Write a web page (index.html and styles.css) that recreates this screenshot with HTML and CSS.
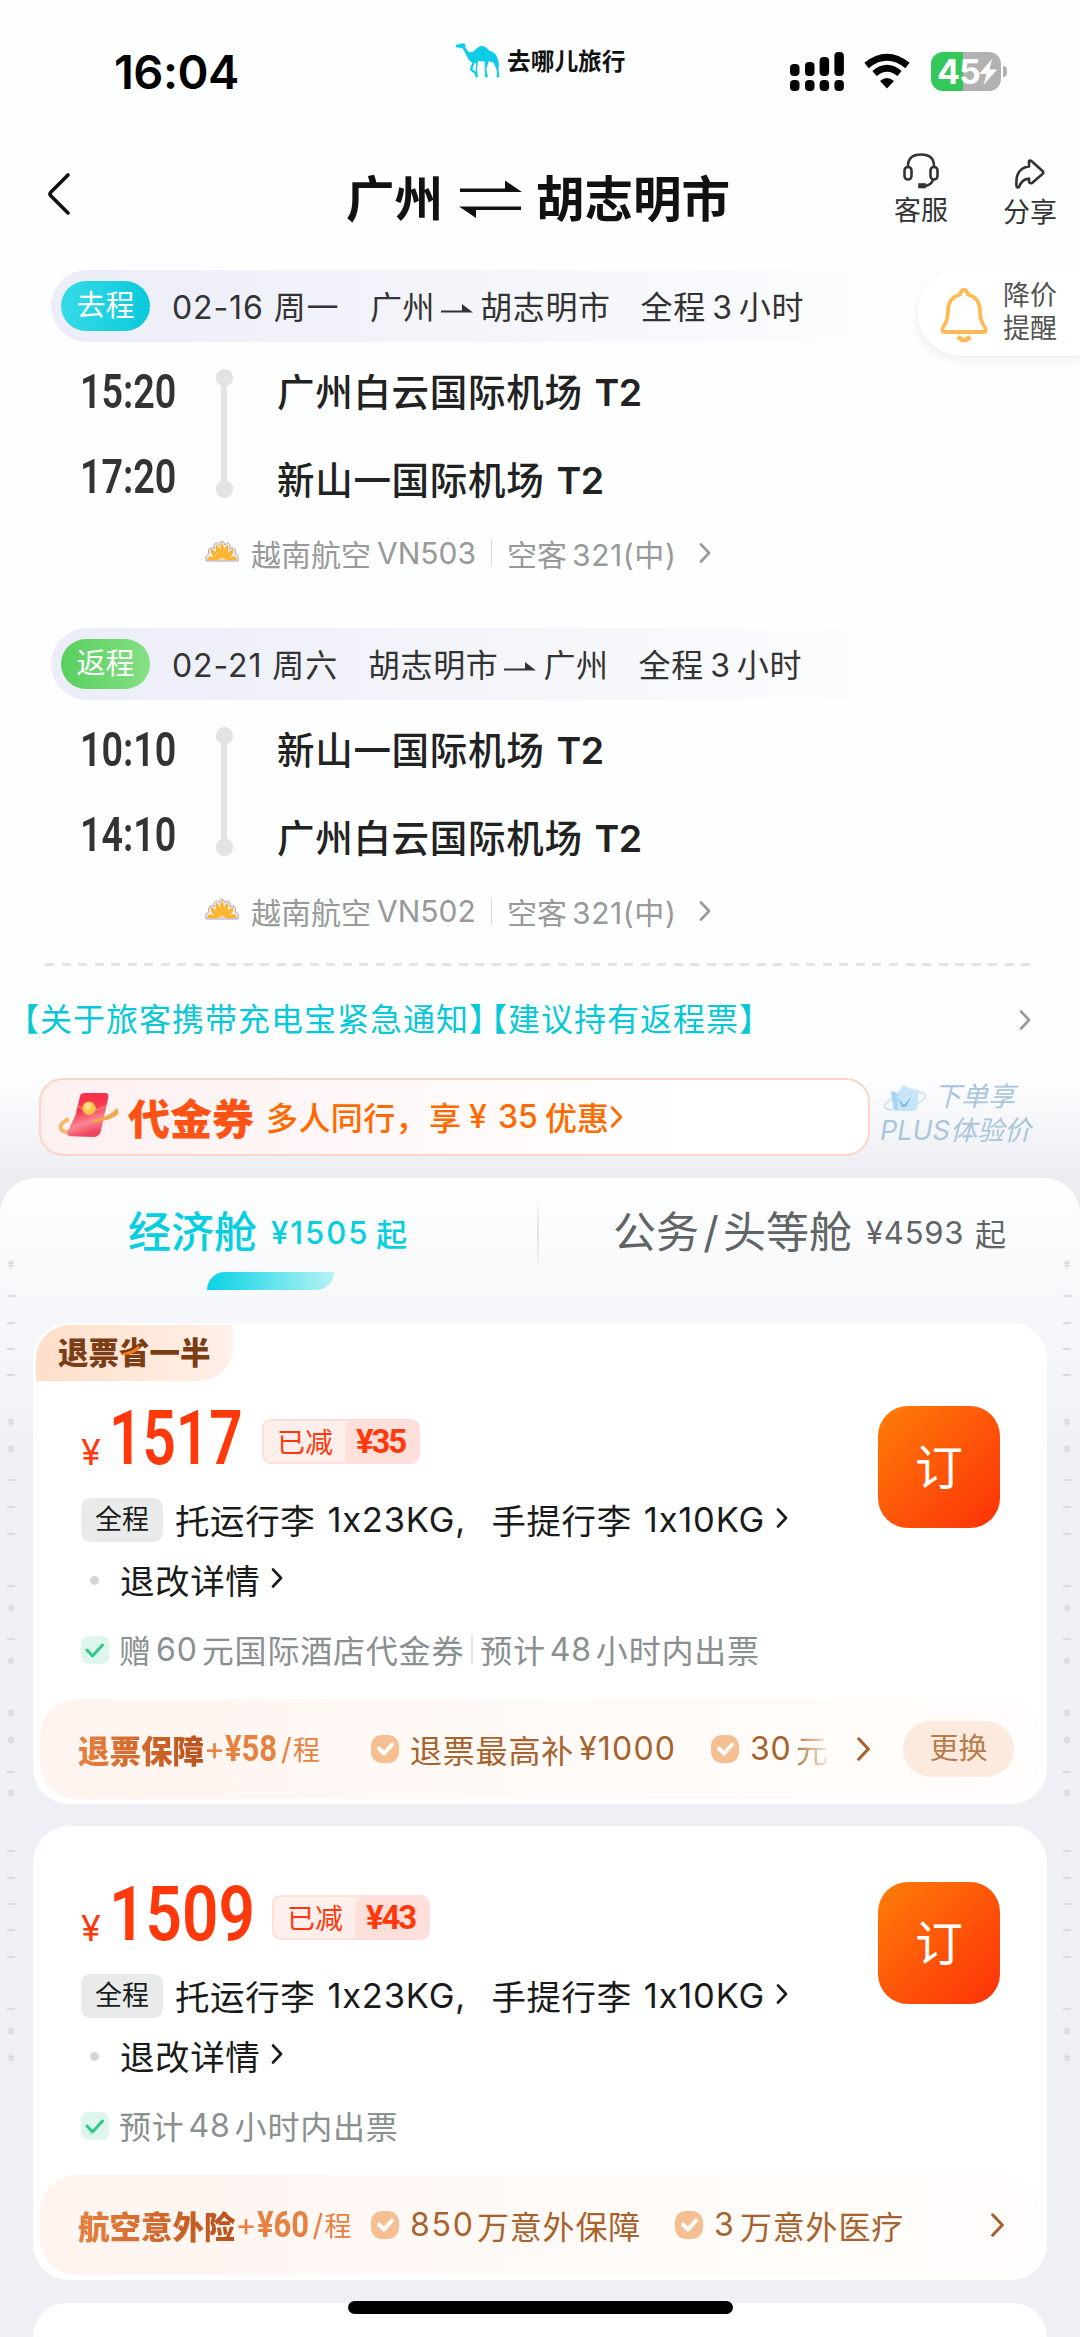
FILE: index.html
```html
<!DOCTYPE html>
<html lang="zh-CN">
<head>
<meta charset="utf-8">
<title>广州 ⇌ 胡志明市</title>
<link rel="stylesheet" href="styles.css">
</head>
<body>
<svg width="0" height="0" class="defs">
  <symbol id="chev" viewBox="0 0 12 20"><path d="M2 1.5 10 10 2 18.5" fill="none" stroke="currentColor" stroke-width="2.6" stroke-linecap="round" stroke-linejoin="round"/></symbol>
  <symbol id="to" viewBox="0 0 32 12"><path d="M0 8.500H21V2L32 10.500H0Z" fill="currentColor"/></symbol>
  <symbol id="lotus" viewBox="0 0 34 22"><path d="M1 21C0 17 2 14 4 14 2 9 6 6 9 9 8 3 12 1 14 5 15 0 19 0 20 5 22 1 26 3 25 9 28 6 32 9 30 14 32 14 34 17 33 21Z" fill="#f4f0f4" stroke="#a99fc0" stroke-width="1"/><g fill="#fdb52e"><path d="M17 1.500Q21 8 17 20 13 8 17 1.500"/><path d="M11 4Q17 9 16 20 9 13 11 4"/><path d="M23 4Q17 9 18 20 25 13 23 4"/><path d="M5 8.500Q13 12 15 20 6 18 5 8.500"/><path d="M29 8.500Q21 12 19 20 28 18 29 8.500"/><path d="M2 20Q3 13 13 19.500L12 20.500ZM32 20Q31 13 21 19.500L22 20.500Z"/></g></symbol>
  <symbol id="ok" viewBox="0 0 28 28"><rect width="28" height="28" rx="11" fill="#f5bf92"/><path d="m8 13.500 5 5 8-9" fill="none" stroke="#fff" stroke-width="4" stroke-linecap="round" stroke-linejoin="round"/></symbol>
  <symbol id="done" viewBox="0 0 28 28"><rect width="28" height="28" rx="7" fill="#dff6ec"/><path d="m6 14 5.500 6L21.500 9" fill="none" stroke="#2cca86" stroke-width="3" stroke-linecap="round" stroke-linejoin="round"/></symbol>
</svg>

<div class="status">
  <div class="clock">16:04</div>
  <div class="brand">
    <svg class="camel" viewBox="45 70 135 104"><path fill="#0bcde8" fill-rule="evenodd" d="M47 77Q50 72 59 74L66 71 75 72Q75 90 88 97 98 100 104 92 116 78 129 79 140 82 148 93 164 97 169 108 179 125 176 148L178 173H168Q173 169 170 150L160 128Q152 126 147 124L139 148 144 173H134Q138 160 134 148V126Q124 125 114 124L111 148 114 173H106Q107 168 104 163L91 153Q88 147 97 130 84 122 79 108 74 94 67 86L48 83ZM104 130 97 148 107 157 108 130Z"/></svg>
    <span>去哪儿旅行</span>
  </div>
  <svg class="signal" viewBox="0 0 54 39"><rect y="12" width="9.500" height="12" rx="4"/><rect x="15" y="10" width="9.500" height="14" rx="4"/><rect x="29.600" y="5" width="9.500" height="19" rx="4"/><rect x="44.400" width="9.500" height="24" rx="4"/><rect y="28" width="9.500" height="11" rx="4"/><rect x="15" y="28" width="9.500" height="11" rx="4"/><rect x="29.600" y="28" width="9.500" height="11" rx="4"/><rect x="44.400" y="28" width="9.500" height="11" rx="4"/></svg>
  <svg class="wifi" viewBox="0 0 46 35"><path d="M2.500 11.500Q23-5 43.500 11.500M10.500 19.500Q23 9 35.500 19.500" fill="none" stroke="#000" stroke-width="6.800"/><path d="M16 27Q23 21 30 27L23 34.500Z"/></svg>
  <div class="battery"><span>45</span><svg viewBox="0 0 18 26"><path d="M13 0 0 15H7.500L4.500 26 18 10.500H10.500Z" fill="#fff"/></svg></div>
  <i class="nub"></i>
</div>

<div class="header">
  <svg class="back" viewBox="0 0 24 42"><path d="M21 2 4 19Q2 21 4 23L21 40" fill="none" stroke="#111" stroke-width="3.600" stroke-linecap="round"/></svg>
  <h1><span>广州</span><svg viewBox="0 0 63 38"><path d="M1 8.500H46V.500L63 12H1ZM62 26.500H0L17 38V30H62Z" fill="#111"/></svg><span>胡志明市</span></h1>
  <div class="action service">
    <svg viewBox="0 0 36 36" fill="none" stroke="#333" stroke-width="2.600"><path d="M5 14V13Q5 1.500 18 1.500T31 13V14"/><rect x="1.500" y="14" width="7" height="12.500" rx="3.500"/><rect x="27.500" y="14" width="7" height="12.500" rx="3.500"/><path d="M30 27Q28 32.500 21 33"/><rect x="16.500" y="31.500" width="5" height="2.500" fill="#333"/></svg>
    <span>客服</span>
  </div>
  <div class="action share">
    <svg viewBox="0 0 30 30" fill="none" stroke="#333" stroke-width="2.600" stroke-linejoin="round"><path d="M14 2Q15 1 17 2.500L27.500 12Q29 13.500 27.500 15L17 24Q14 25 14 22V19.500Q7 20 4 28 1.500 29 1.500 27 0 9 14 7.500Z"/></svg>
    <span>分享</span>
  </div>
</div>

<div class="alert">
  <svg viewBox="0 0 48 54" fill="none" stroke="#ffb957" stroke-width="3.800" stroke-linejoin="round"><path d="M24 2Q27 2 28 6.500 39 9 40 22 40 32 43.500 37 48 44 43 44H5Q0 44 4.500 37 8 32 8 22 9 9 20 6.500 21 2 24 2Z"/><path d="M18 48.500Q24 56 30 48.500" stroke-width="4.500"/></svg>
  <span>降价<br>提醒</span>
</div>

<section class="leg">
  <div class="leg-head"><span class="tag go">去程</span><span class="date d1">02-16 周一</span><span>广州</span><svg class="to"><use href="#to"/></svg><span>胡志明市</span><span class="dur">全程<i>3</i>小时</span></div>
  <div class="route">
    <div class="times"><span>15:20</span><span>17:20</span></div>
    <div class="line"></div>
    <div class="ports"><span>广州白云国际机场<i>T2</i></span><span>新山一国际机场<i>T2</i></span></div>
  </div>
  <div class="plane"><svg class="lotus"><use href="#lotus"/></svg><span>越南航空</span><i class="no">VN503</i><b></b><span>空客</span><i class="type">321(中)</i><svg class="chev"><use href="#chev"/></svg></div>
</section>
<section class="leg">
  <div class="leg-head"><span class="tag ret">返程</span><span class="date d2">02-21 周六</span><span>胡志明市</span><svg class="to"><use href="#to"/></svg><span>广州</span><span class="dur">全程<i>3</i>小时</span></div>
  <div class="route">
    <div class="times"><span>10:10</span><span>14:10</span></div>
    <div class="line"></div>
    <div class="ports"><span>新山一国际机场<i>T2</i></span><span>广州白云国际机场<i>T2</i></span></div>
  </div>
  <div class="plane"><svg class="lotus"><use href="#lotus"/></svg><span>越南航空</span><i class="no">VN502</i><b></b><span>空客</span><i class="type">321(中)</i><svg class="chev"><use href="#chev"/></svg></div>
</section>

<div class="dash"></div>
<div class="notice"><span class="q">【关于旅客携带充电宝紧急通知】</span><span class="q">【建议持有返程票】</span><svg class="chev"><use href="#chev"/></svg></div>

<div class="promo">
  <div class="coupon">
    <svg class="gift" viewBox="0 0 64 50"><defs><linearGradient id="red" x1="0" y1="0" x2=".3" y2="1"><stop offset="0" stop-color="#fb2c4b"/><stop offset=".45" stop-color="#f8344e"/><stop offset=".75" stop-color="#fb8793"/><stop offset="1" stop-color="#f04460"/></linearGradient></defs><path d="M11 28Q0 33 3 39 6 43 13 41" fill="none" stroke="#f6b762" stroke-width="4"/><path d="M23 3Q24 1 28 1H49Q53 1 52 6L44 42Q42 47 37 47L12 46Q8 45 10 41L18 24Z" fill="url(#red)"/><path d="M20 14Q31 24 49 15" fill="none" stroke="#fb8a50" stroke-width="1.500"/><circle cx="32" cy="17" r="7" fill="#ffc34d"/><circle cx="31" cy="15" r="3.500" fill="#ffe089"/><path d="M36 30Q53 27 61 18L62 22Q56 29 36 31Z" fill="#f0a94a" stroke="#f0a94a" stroke-width="1.500"/></svg>
    <strong>代金券</strong><span class="ctext">多人同行，</span><span>享</span><i class="yen">¥</i><i class="amt">35</i><span>优惠</span><svg class="cc"><use href="#chev"/></svg>
  </div>
  <div class="plus">
    <div><svg viewBox="0 0 44 28"><ellipse cx="22" cy="17" rx="21" ry="7" transform="rotate(-16 22 17)" fill="none" stroke="#b9dcef" stroke-width="1.200"/><path d="M8 7 14 9 21 1 28 5 36 6 34 24Q34 27 30 27H14Q10 27 10 24Z" fill="#c7e5f8"/><path d="M15 14 21 21 28 13 23 23H19Z" fill="#7fb9e2"/><path d="M8 7 14 9 15 26 11 25Z" fill="#a4d4f4"/></svg><em>下单享</em></div>
    <em>PLUS体验价</em>
  </div>
</div>

<main class="sheet">
  <svg class="marks left" viewBox="0 0 16 1159"><path id="dashes" d="M3 118h8M3 145h8M3 171h8M3 197h8M3 302h8M3 329h8M3 356h8M3 408h8M3 461h8M3 594h8M3 673h8M3 700h8M3 726h8M3 752h8M3 779h8M3 831h8"/><path id="stars" d="M7 82v8m-3-6 6 4m0-4-6 4M7 240v8m-3-6 6 4m0-4-6 4M7 267v8m-3-6 6 4m0-4-6 4M7 426v8m-3-6 6 4m0-4-6 4M7 479v8m-3-6 6 4m0-4-6 4M7 531v8m-3-6 6 4m0-4-6 4M7 558v8m-3-6 6 4m0-4-6 4M7 611v8m-3-6 6 4m0-4-6 4M7 849v8m-3-6 6 4m0-4-6 4M7 876v8m-3-6 6 4m0-4-6 4"/></svg>
  <svg class="marks right" viewBox="0 0 16 1159"><use href="#dashes"/><use href="#stars"/></svg>
  <div class="tabs">
    <div class="tab on"><span class="cabin">经济舱</span><i>¥1505</i><span>起</span></div>
    <b></b>
    <div class="tab"><span class="cabin">公务<i class="slash">/</i>头等舱</span><i>¥4593</i><span>起</span></div>
  </div>
  <div class="indicator"></div>

  <article class="card first">
    <div class="ribbon">退票省一半<svg viewBox="0 0 24 18"><path d="M1 14Q16 12 22 4L23 9Q16 16 2 17Z" fill="#fb7a1c"/></svg></div>
    <div class="body">
      <div class="info">
        <div class="price"><small>¥</small><strong class="p1">1517</strong><div class="cut"><span>已减</span><i>¥35</i></div></div>
        <div class="bag"><b>全程</b><span>托运行李</span><i class="kg1">1x23KG,</i><span>手提行李</span><i class="kg2">1x10KG</i><svg><use href="#chev"/></svg></div>
        <div class="detail"><span>退改详情</span><svg><use href="#chev"/></svg></div>
        <div class="note"><svg><use href="#done"/></svg><span>赠</span><i>60</i><span>元国际酒店代金券</span><b></b><span>预计</span><i>48</i><span>小时内出票</span></div>
      </div>
      <button>订</button>
    </div>
    <div class="strip">
      <div class="plan"><strong>退票保障</strong><i class="add">+</i><i class="fee">¥58</i><i class="per">/</i><small>程</small></div>
      <div class="perks p-wide"><svg class="ok"><use href="#ok"/></svg><span>退票最高补</span><i class="n1000">¥1000</i><svg class="ok"><use href="#ok"/></svg><i class="n30">30</i><span class="fade">元</span></div>
      <svg class="more"><use href="#chev"/></svg>
      <div class="swap">更换</div>
    </div>
  </article>

  <article class="card">
    <div class="body">
      <div class="info">
        <div class="price"><small>¥</small><strong class="p2">1509</strong><div class="cut"><span>已减</span><i>¥43</i></div></div>
        <div class="bag"><b>全程</b><span>托运行李</span><i class="kg1">1x23KG,</i><span>手提行李</span><i class="kg2">1x10KG</i><svg><use href="#chev"/></svg></div>
        <div class="detail"><span>退改详情</span><svg><use href="#chev"/></svg></div>
        <div class="note"><svg><use href="#done"/></svg><span>预计</span><i>48</i><span>小时内出票</span></div>
      </div>
      <button>订</button>
    </div>
    <div class="strip">
      <div class="plan"><strong>航空意外险</strong><i class="add">+</i><i class="fee">¥60</i><i class="per">/</i><small>程</small></div>
      <div class="perks"><svg class="ok"><use href="#ok"/></svg><i class="n850">850</i><span>万意外保障</span><svg class="ok"><use href="#ok"/></svg><i class="n3">3</i><span>万意外医疗</span></div>
      <svg class="more last"><use href="#chev"/></svg>
    </div>
  </article>
  <article class="card next"></article>
</main>
<div class="home"></div>
</body>
</html>
```
FILE: styles.css
```css
* { box-sizing: border-box; }
body {
  margin: 0; width: 1080px; height: 2337px; overflow: hidden; position: relative;
  background: #fdfefe; color: #1b1c1e;
  font-family: Inter, "Noto Sans CJK SC", sans-serif;
  white-space: nowrap; text-spacing-trim: space-all;
}
i { font-style: normal; }
svg { display: block; flex: none; overflow: visible; }
.defs { position: absolute; }
span, i, b, strong, small { flex: none; }

.status { display: flex; height: 125px; padding-left: 114px; }
.clock { width: 341px; font-size: 47px; font-weight: 600; line-height: 144px; letter-spacing: -.5px; color: #000; }
.brand { display: flex; width: 335px; height: 40px; margin-top: 40px; align-items: center; color: #111; font-size: 23.700px; font-weight: 700; }
.camel { width: 45px; height: 34.500px; margin-right: 7px; }
.signal { width: 54px; height: 39px; margin-top: 52px; }
.wifi { width: 46px; height: 35px; margin: 54px 0 0 20px; }
.battery { display: flex; align-items: center; width: 70px; height: 39px; margin: 52px 0 0 21px; padding-left: 6px; border-radius: 12px; background: linear-gradient(90deg, #34c759 32px, #b2b2b2 32px); color: #fff; font-size: 34px; font-weight: 700; letter-spacing: -1px; line-height: 39px; }
.battery span { width: 42px; }
.battery svg { width: 18px; height: 26px; }
.nub { width: 4px; height: 11px; margin: 66px 0 0 2px; border-radius: 0 5px 5px 0; background: #b2b2b2; }

.header { display: flex; height: 145px; padding-left: 47px; }
.back { width: 24px; height: 42px; margin-top: 48px; }
h1 { display: flex; align-items: center; width: 547px; height: 60px; margin: 41px 0 0 275px; font-size: 48.500px; font-weight: 600; color: #111; }
h1 svg { width: 63px; height: 38px; margin: 6px 14px 0 16px; }
.action { display: flex; flex-direction: column; align-items: center; width: 56px; font-size: 27px; line-height: 36px; color: #333; }
.service { margin-top: 28px; }
.service svg { width: 36px; height: 36px; margin-bottom: 4px; }
.share { margin: 34px 0 0 53px; }
.share svg { width: 30px; height: 30px; margin-bottom: 6px; }

.alert { position: absolute; right: 0; top: 268px; display: flex; align-items: center; width: 163px; height: 88px; padding-left: 23px; border-radius: 44px 0 0 44px; background: #fff; box-shadow: 0 5px 8px rgba(40, 50, 60, .06), 0 0 2px rgba(40, 50, 60, .08); font-size: 27px; line-height: 33px; color: #555; z-index: 2; }
.alert svg { width: 48px; height: 54px; margin: 6px 15px 0 0; }

.leg { height: 358px; }
.leg-head { display: flex; align-items: center; height: 72px; margin-left: 51px; padding: 0 0 3px 10px; border-radius: 36px 0 0 36px; background: linear-gradient(90deg, #ebedf8, #f3f4fa 35%, #fdfefe 88%); font-size: 32px; letter-spacing: .6px; color: #333; }
.tag { width: 89px; height: 50px; margin-top: 2px; border-radius: 25px; color: #fff; font-size: 29px; line-height: 49px; text-align: center; letter-spacing: 0; }
.go { background: linear-gradient(90deg, #35dbe6, #0bc9dc); }
.ret { background: linear-gradient(90deg, #58cf5e, #86e085); }
.date { margin-left: 22px; width: 198px; letter-spacing: .9px; }
.d2 { width: 196px; }
.to { width: 32px; height: 12px; margin: 6px 7px 0 6px; }
.dur { margin-left: 30px; }
.dur i { display: inline-block; width: 33px; text-align: center; }
.route { display: flex; height: 181px; padding: 7px 0 0 80px; }
.times { display: flex; flex-direction: column; width: 136px; font: 600 48px/85px Roboto, sans-serif; color: #333; transform: scaleX(.785); transform-origin: 0 0; }
.line { position: relative; width: 17px; height: 129px; margin-top: 20px; border-radius: 9px; background: radial-gradient(circle at 8.500px 8.500px, #e0e4e5 8.500px, transparent 9px), radial-gradient(circle at 8.500px 120.500px, #e0e4e5 8.500px, transparent 9px), linear-gradient(90deg, transparent 5.500px, #e0e4e5 5.500px 11.500px, transparent 11.500px); }
.ports { display: flex; flex-direction: column; margin-left: 44px; font-size: 37.500px; font-weight: 500; line-height: 88px; letter-spacing: .7px; color: #222; }
.ports i { margin-left: 12px; font-weight: 600; letter-spacing: -.5px; }
.plane { display: flex; align-items: center; height: 60px; padding-left: 205px; font-size: 30px; color: #999; }
.lotus { width: 34px; height: 22px; margin: -4px 12px 0 0; }
.no { width: 113px; padding-left: 6px; }
.plane b { width: 1px; height: 28px; margin: 0 15px 0 7px; background: #ddd; }
.type { width: 132px; padding-left: 5px; letter-spacing: .6px; }
.chev { width: 12px; height: 20px; }

.dash { width: 985px; height: 3px; margin: -23px 0 0 45px; background: repeating-linear-gradient(90deg, #e0e2e3 0 9px, transparent 9px 16.550px); }
.notice { display: flex; align-items: center; height: 60px; margin-top: 21px; padding-left: 7px; font-size: 32px; letter-spacing: 1px; color: #08c8d8; }
.q + .q { margin-left: -27px; }
.notice .chev { margin: 6px 49px 0 auto; color: #999; }
.leg, .dash, .notice { position: relative; }
.promo { display: flex; height: 167px; padding: 31px 0 0 39px; background: linear-gradient(#fdfefe 15%, #ecedf3 80%); }
.coupon { display: flex; align-items: center; width: 831px; height: 78px; padding: 0 0 2px 17px; border: 2px solid #fdd5c7; border-radius: 24px; background: linear-gradient(90deg, #fef0f0, #fff 80%); color: #ff6a00; font-size: 32px; font-weight: 500; }
.gift { width: 62px; height: 48px; margin-right: 8px; }
.coupon strong { width: 138px; font-size: 42px; font-weight: 800; color: #fe5314; }
.ctext { width: 163px; letter-spacing: .4px; }
.yen { width: 37px; padding-left: 8px; }
.amt { width: 47px; }
.cc { width: 13px; height: 24px; margin: 2px 0 0 1px; }
.plus { margin: 2px 0 0 10px; font-size: 27px; line-height: 34px; color: #abc6da; }
.plus div { display: flex; }
.plus svg { width: 44px; height: 28px; margin: 4px 7px 0 3px; }

.sheet { position: relative; height: 1159px; margin-top: -36px; padding: 0 33px; border-radius: 36px 36px 0 0; background: linear-gradient(#fdfefe, #eff0f5 290px); }
.marks { position: absolute; top: 0; width: 16px; height: 1159px; fill: none; stroke: #d9dbe0; stroke-width: 1.800; }
.left { left: 4px; }
.right { right: 4px; }
.tabs { display: flex; align-items: center; height: 94px; color: #606466; font-size: 31px; }
.tab { flex: none; display: flex; width: 508px; padding: 14px 0 0 74px; align-items: center; height: 94px; }
.on { width: 504px; padding-left: 95px; color: #08cfe0; font-weight: 500; }
.tabs b { width: 2px; height: 76px; margin-top: 18px; background: linear-gradient(transparent, #dfe1e4, transparent); }
.cabin { font-size: 43px; line-height: 80px; }
.cabin .slash { display: inline-block; width: 24px; text-align: center; }
.tab > i { width: 110px; margin-left: 13px; padding-left: 1px; letter-spacing: .8px; }
.tab.on > i { width: 106px; letter-spacing: 2px; }
.indicator { width: 127px; height: 18px; margin-left: 174px; border-radius: 18px 0 18px 0; background: linear-gradient(90deg, #08d3e4, #b6f2f4); }

.card { position: relative; height: 454px; margin-bottom: 23px; border-radius: 36px; background: #fff; padding-top: 56px; }
.card.first { height: 481px; margin: 33px 0 22px; padding-top: 83px; }
.card.next { margin: 0; height: 34px; border-radius: 36px 36px 0 0; padding: 0; }
.ribbon { position: absolute; left: 3px; top: 2px; width: 197px; height: 56px; padding-left: 22px; border-radius: 34px 0 34px 0; background: linear-gradient(90deg, #fddfca, #fff0e8); color: #7b3d16; font-size: 30.500px; font-weight: 800; line-height: 56px; }
.ribbon svg { position: absolute; left: 83px; top: 17px; width: 24px; height: 14px; }
.body { display: flex; height: 293px; padding-left: 48px; }
.info { width: 797px; }
.price { display: flex; height: 62px; color: #ff390b; }
.price small { width: 28px; font-size: 36px; line-height: 92px; }
.price strong { font: 600 76px/64px Roboto, sans-serif; transform: scaleX(.77); transform-origin: 0 0; }
.p1 { width: 153px; }
.price .p2 { width: 163px; transform: scaleX(.84); }
.cut { display: flex; align-items: center; width: 158px; height: 45px; margin-top: 13px; border: 2px solid #ffdfd9; border-radius: 9px; background: #ffefec; font-size: 28px; overflow: hidden; }
.cut span { width: 81px; padding: 0 0 2px 13px; }
.cut i { width: 75px; height: 45px; padding-left: 11px; border-radius: 12px 0 0 0; background: #ffdfd9; font: 700 33px/46px Roboto, sans-serif; letter-spacing: -2.200px; }
.bag { display: flex; align-items: center; height: 60px; margin-top: 22px; font-size: 34.500px; letter-spacing: .6px; color: #1a1a1a; }
.bag b { width: 82px; height: 44px; margin-right: 12px; border-radius: 9px; background: #e9ebea; font-size: 27px; font-weight: 400; line-height: 43px; text-align: center; letter-spacing: 0; }
.bag span { padding-bottom: 2px; }
.kg1 { width: 176px; padding-left: 12px; }
.kg2 { width: 144px; padding-left: 12px; }
.bag i { padding-bottom: 2px; letter-spacing: .8px; }
.bag svg, .detail svg { width: 12px; height: 20px; margin-top: -4px; }
.detail { display: flex; align-items: center; height: 60px; font-size: 34.500px; letter-spacing: .6px; color: #1a1a1a; }
.detail span { padding-bottom: 3px; }
.detail::before { content: ""; width: 9px; height: 9px; margin: 0 21px 0 9px; border-radius: 5px; background: #d5d8d8; }
.detail svg { margin-left: 11px; }
.note { display: flex; align-items: center; height: 60px; margin-top: 9px; font-size: 32px; letter-spacing: .8px; color: #8a8f8f; }
.note svg { width: 28px; height: 28px; margin: 2px 10px 0 0; }
.note i { width: 50px; text-align: center; }
.note b { width: 2px; height: 28px; margin: 0 7px 0 7px; background: #e2e4e4; }
button { width: 122px; height: 122px; padding: 0 0 6px; border: 0; border-radius: 30px; background: linear-gradient(135deg, #ff7d09, #fd3108); color: #fff; font: 400 48px/114px "Noto Sans CJK SC", sans-serif; }
.strip { position: relative; display: flex; align-items: center; width: 1000px; height: 100px; margin: 0 7px; padding: 0 0 1px 38px; border-radius: 36px; background: linear-gradient(90deg, #fff4f0, #fffaf7 50%, #fffdfb); color: #a8622d; }
.plan { display: flex; align-items: center; width: 293px; color: #e8803f; }
.plan strong { background: linear-gradient(90deg, #e8803f, #b9521b); -webkit-background-clip: text; color: transparent; font-size: 31.500px; font-weight: 800; }
.add { width: 21px; font-size: 32px; }
.fee { width: 56px; font: 700 36px/44px Roboto, sans-serif; transform: scaleX(.86); transform-origin: 0 0; }
.per { width: 12px; font-size: 30px; }
.plan small { font-size: 27px; }
.perks { display: flex; align-items: center; font-size: 32px; letter-spacing: .8px; }
.p-wide { width: 456px; }
.ok { width: 28px; height: 28px; margin-right: 11px; }
.n1000 { width: 137px; padding-left: 5px; letter-spacing: 1.200px; }
.n30 { width: 46px; }
.n850 { width: 67px; letter-spacing: 1.800px; }
.n3 { width: 26px; }
.perks span + .ok { margin-left: 34px; }
.fade { background: linear-gradient(90deg, #b5783f, #f2e3d8 90%); -webkit-background-clip: text; color: transparent; }
.more { width: 15px; height: 24px; margin-left: 29px; }
.more.last { margin-left: auto; margin-right: 35px; }
.swap { width: 111px; height: 56px; margin-left: 32px; border-radius: 28px; background: #fbeadd; color: #b97c4c; font-size: 29px; line-height: 55px; text-align: center; }
.home { position: absolute; left: 348px; bottom: 23px; width: 385px; height: 13px; border-radius: 7px; background: #000; }
```
